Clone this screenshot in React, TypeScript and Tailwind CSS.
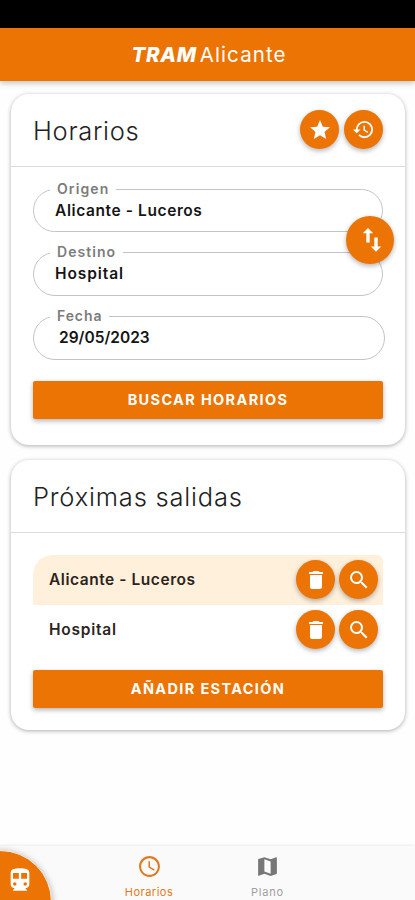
import type { ReactNode } from "react"
import {
  MdAccessTime,
  MdDelete,
  MdHistory,
  MdMap,
  MdSearch,
  MdStar,
} from "react-icons/md"

const STATIONS = [
  { name: "Alicante - Luceros", style: "rounded-tl-[20px] rounded-tr-md bg-[#fff0dc]", text: "tracking-[0.55px]" },
  { name: "Hospital", style: "", text: "tracking-[0.75px]" },
]

function RoundButton({ label, children }: { label: string; children: ReactNode }) {
  return (
    <button
      aria-label={label}
      className="flex size-[39px] shrink-0 items-center justify-center rounded-full bg-[#eb7404] text-white shadow-[0_2px_5px_rgba(0,0,0,0.3)]"
    >
      {children}
    </button>
  )
}

function Card({ title, titleClass, actions, children }: {
  title: string
  titleClass: string
  actions?: ReactNode
  children: ReactNode
}) {
  return (
    <section className="mr-[10px] ml-[11px] rounded-[18px] bg-white shadow-[0_1px_4px_rgba(0,0,0,0.32)]">
      <header className="flex h-[73px] items-center justify-between border-b border-[#dcdcdc] pr-[22px] pl-[22px]">
        <h2 className={`pt-[2px] text-[25.5px] font-light text-[#222] ${titleClass}`}>{title}</h2>
        {actions}
      </header>
      <div className="px-[22px]">{children}</div>
    </section>
  )
}

function Field({ label, labelClass, value, valueClass, className }: {
  label: string
  labelClass: string
  value: string
  valueClass: string
  className: string
}) {
  return (
    <fieldset className={`rounded-[22px] border border-[#c4c4c4] pl-[16px] ${className}`}>
      <legend className={`h-[14px] px-[7px] text-[14px] leading-[14px] font-semibold whitespace-nowrap text-[#7c7c7c] ${labelClass}`}>
        {label}
      </legend>
      <p className={`pt-[6px] text-[15.5px] leading-[17px] font-semibold text-[#151515] ${valueClass}`}>{value}</p>
    </fieldset>
  )
}

function WideButton({ children, className }: { children: ReactNode; className: string }) {
  return (
    <button
      className={`flex h-[38px] w-full items-center justify-center rounded-xs bg-[#eb7404] text-[14.5px] font-bold text-white shadow-[0_2px_5px_rgba(0,0,0,0.3)] ${className}`}
    >
      {children}
    </button>
  )
}

export default function App() {
  return (
    <div className="flex h-[900px] w-[415px] flex-col overflow-hidden bg-[#fefefe] font-['Inter',sans-serif]">
      <div className="h-[28px] shrink-0 bg-black" />
      <header className="flex h-[53px] shrink-0 items-center justify-center gap-[3px] bg-[#eb7404] pt-px pl-[3px] text-[20.5px] text-white shadow-[0_2px_6px_rgba(0,0,0,0.25)]">
        <span className="font-extrabold tracking-[0.7px] italic">TRAM</span>
        <span className="tracking-[1.1px]">Alicante</span>
      </header>

      <main className="flex flex-1 flex-col gap-[15px] pt-[13px]">
        <Card
          title="Horarios"
          titleClass="tracking-[0.7px]"
          actions={
            <div className="flex gap-[5px] pb-px">
              <RoundButton label="Favoritos"><MdStar size={24} /></RoundButton>
              <RoundButton label="Historial"><MdHistory size={23} /></RoundButton>
            </div>
          }
        >
          <div className="relative flex h-[278px] flex-col pt-[15px]">
            <Field label="Origen" labelClass="tracking-[1.1px]" value="Alicante - Luceros" valueClass="pl-[5px] tracking-[0.6px]" className="h-[50px]" />
            <Field label="Destino" labelClass="tracking-[1.05px]" value="Hospital" valueClass="pl-[5px] tracking-[0.9px]" className="mt-[13px] h-[51px]" />
            <Field label="Fecha" labelClass="tracking-[0.9px]" value="29/05/2023" valueClass="pl-[9px]" className="mt-[13px] -mr-[2px] h-[51px]" />
            <WideButton className="mt-[21px] pb-px tracking-[1.35px]">BUSCAR HORARIOS</WideButton>
            <button
              aria-label="Intercambiar"
              className="absolute top-[49px] -right-[11px] flex size-[48px] items-center justify-center rounded-full bg-[#eb7404] pl-[3px] text-white shadow-[0_2px_5px_rgba(0,0,0,0.3)]"
            >
              <svg width="20" height="26" viewBox="0 0 20 26" fill="currentColor">
                <path d="M6 1 0.8 6.2H4.3V15.5H7.7V6.2H11.2ZM15.7 19.6V10.5H12.3V19.6H8.8L14 24.8 19.2 19.6Z" />
              </svg>
            </button>
          </div>
        </Card>

        <Card title="Próximas salidas" titleClass="tracking-[0.8px]">
          <div className="pt-[22px] pb-[22px]">
            {STATIONS.map((station) => (
              <div key={station.name} className={`flex h-[50px] items-center justify-between pr-[5px] pb-px pl-[16px] ${station.style}`}>
                <span className={`text-[15.5px] font-semibold text-[#2b241c] ${station.text}`}>{station.name}</span>
                <div className="flex gap-[4px]">
                  <RoundButton label="Eliminar"><MdDelete size={24} /></RoundButton>
                  <RoundButton label="Buscar"><MdSearch size={24} /></RoundButton>
                </div>
              </div>
            ))}
            <WideButton className="mt-[15px] pb-px tracking-[1.35px]">AÑADIR ESTACIÓN</WideButton>
          </div>
        </Card>
      </main>

      <nav className="relative flex h-[54px] shrink-0 bg-[#fafafa] pl-[89px] shadow-[0_-1px_3px_rgba(0,0,0,0.07)]">
        <div className="absolute top-[4px] -left-[52px] size-[104px] rounded-full border border-[#fff1e2] bg-[#eb7404] shadow-[0_1px_6px_rgba(0,0,0,0.3)]">
          <svg width="28" height="28" viewBox="0 0 24 24" fill="currentColor" className="absolute top-[15px] left-[57px] text-white">
            <path
              fillRule="evenodd"
              d="M12 2C7.6 2 4 2.5 4 6v9.5A3.5 3.5 0 0 0 7.5 19L6 20.5v.7h12v-.7L16.5 19a3.5 3.5 0 0 0 3.5-3.5V6c0-3.5-3.6-4-8-4ZM6 6h5v5H6ZM13 6h5v5h-5ZM7.5 14a1.5 1.5 0 1 0 0 3 1.5 1.5 0 0 0 0-3ZM16.5 14a1.5 1.5 0 1 0 0 3 1.5 1.5 0 0 0 0-3Z"
            />
          </svg>
        </div>
        <div className="flex w-[120px] flex-col items-center pt-[8px] text-[#df7a20]">
          <MdAccessTime size={25} />
          <span className="mt-[6px] text-[11px] leading-[14px] tracking-[0.5px]">Horarios</span>
        </div>
        <div className="flex w-[117px] flex-col items-center pt-[8px] text-[#777]">
          <MdMap size={25} />
          <span className="mt-[6px] text-[11px] leading-[14px] tracking-[0.8px] text-[#a0a0a0]">Plano</span>
        </div>
      </nav>
    </div>
  )
}
